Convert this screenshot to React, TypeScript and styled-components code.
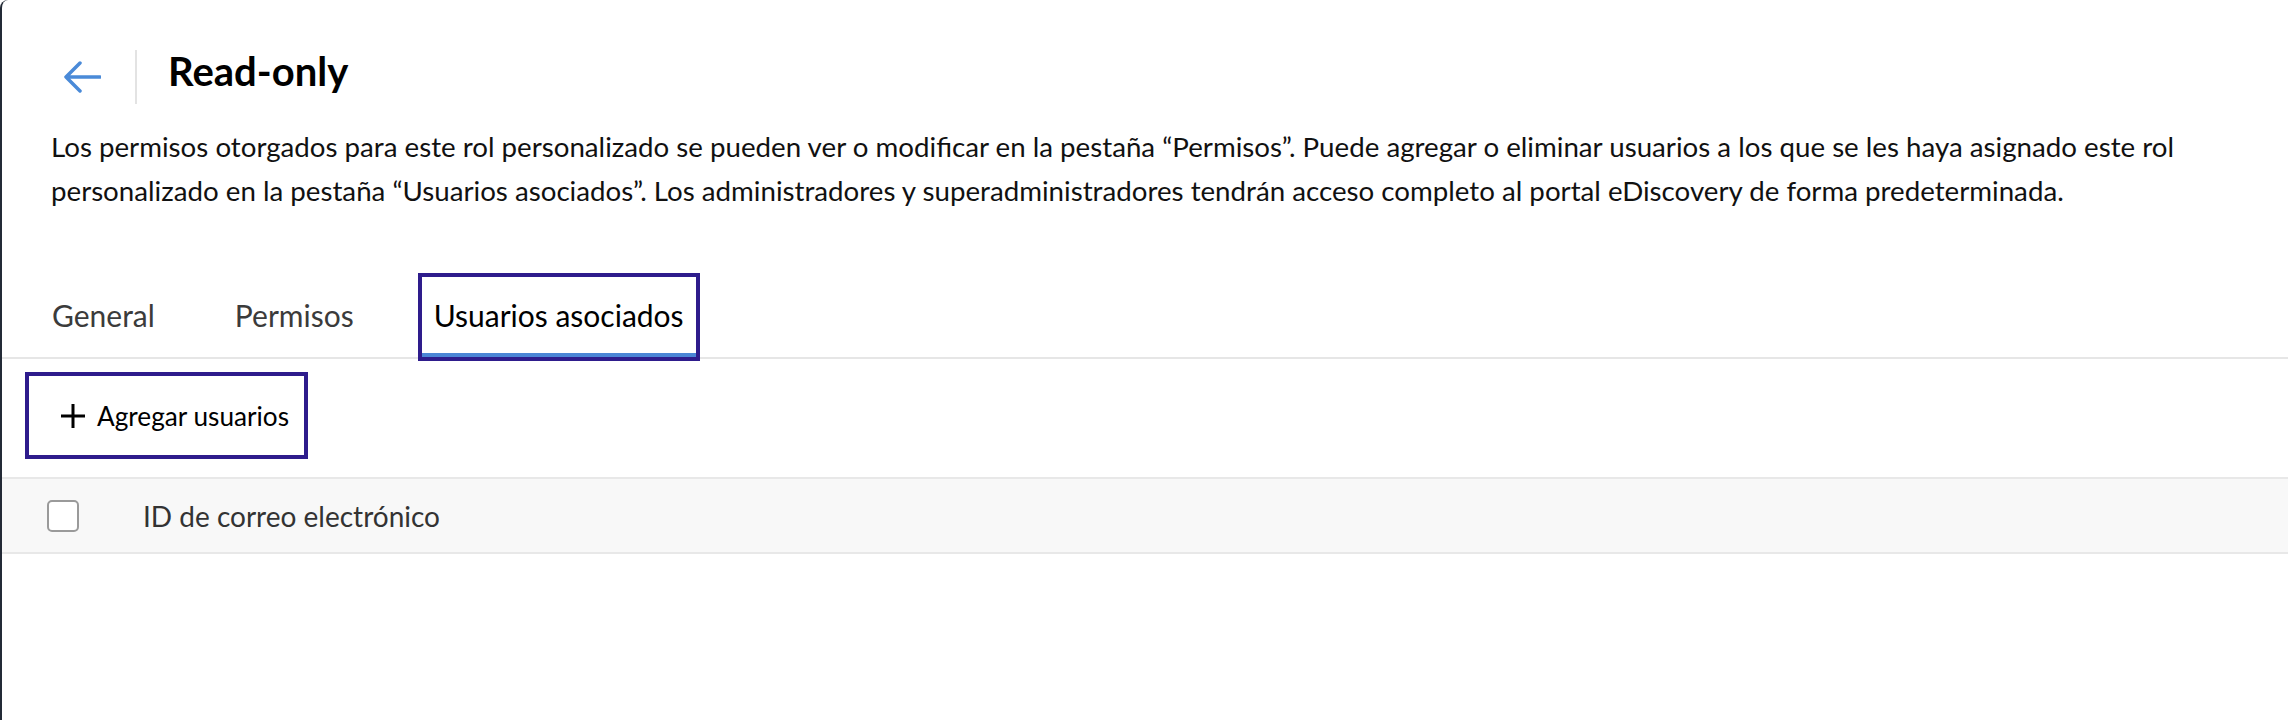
import React from "react";
import styled, { createGlobalStyle } from "styled-components";

const GlobalStyle = createGlobalStyle`
  html, body {
    margin: 0;
    padding: 0;
    background: #ffffff;
    font-family: Lato, "Open Sans", "Liberation Sans", sans-serif;
  }
`;

const Frame = styled.div`
  min-height: 100vh;
  box-sizing: border-box;
  background: #ffffff;
  border-left: 2px solid #232a36;
  border-top-left-radius: 8px;
  overflow: hidden;
`;

const Header = styled.div`
  display: flex;
  align-items: center;
  height: 54px;
  margin-top: 50px;
  padding-left: 61px;
`;

const BackButton = styled.button`
  display: flex;
  align-items: center;
  justify-content: center;
  padding: 0;
  border: none;
  background: none;
  cursor: pointer;
`;

const Divider = styled.div`
  width: 2px;
  height: 54px;
  background: #e3e3e3;
  margin-left: 34px;
`;

const Title = styled.h1`
  align-self: flex-start;
  margin: -6px 0 0 31px;
  font-size: 40px;
  font-weight: 700;
  color: #000000;
  line-height: 54px;
`;

const Description = styled.p`
  margin: 21px 0 0;
  padding: 0 40px 0 49px;
  font-size: 27.7px;
  line-height: 44px;
  color: #111111;
`;

const TabStrip = styled.div`
  display: flex;
  gap: 56px;
  margin-top: 64px;
  padding-left: 38px;
  border-bottom: 2px solid #e6e6e6;
`;

const Tab = styled.div<{ active?: boolean }>`
  display: flex;
  align-items: center;
  height: 80px;
  box-sizing: border-box;
  padding: 0 12px;
  font-size: 30px;
  color: ${(p) => (p.active ? "#000000" : "#3b3b3b")};
  border-bottom: 4px solid ${(p) => (p.active ? "#4a86d6" : "transparent")};
  outline: ${(p) => (p.active ? "4px solid #2e1c8c" : "none")};
  cursor: pointer;
`;

const Toolbar = styled.div`
  display: flex;
  padding: 17px 0 22px 27px;
`;

const AddButton = styled.button`
  display: flex;
  align-items: center;
  gap: 11px;
  height: 79px;
  box-sizing: border-box;
  padding: 0 15px 0 31px;
  border: none;
  background: #ffffff;
  outline: 4px solid #2e1c8c;
  font-family: inherit;
  font-size: 26.2px;
  color: #000000;
  cursor: pointer;
`;

const TableHeader = styled.div`
  display: flex;
  align-items: center;
  height: 77px;
  box-sizing: border-box;
  padding-left: 45px;
  background: #f8f8f8;
  border-top: 2px solid #e8e8e8;
  border-bottom: 2px solid #e8e8e8;
`;

const Checkbox = styled.span`
  width: 32px;
  height: 32px;
  box-sizing: border-box;
  border: 2px solid #9a9a9a;
  border-radius: 5px;
  background: #ffffff;
`;

const ColumnLabel = styled.span`
  margin-left: 64px;
  font-size: 28px;
  color: #333333;
`;

const tabs = ["General", "Permisos", "Usuarios asociados"];

const App: React.FC = () => {
  return (
    <>
      <GlobalStyle />
      <Frame>
        <Header>
          <BackButton aria-label="Volver">
            <svg width="38" height="32" viewBox="0 0 38 32" fill="none">
              <path
                d="M37 16H3M17 2L3 16l14 14"
                stroke="#4a8ad8"
                strokeWidth="3.5"
                strokeLinecap="round"
                strokeLinejoin="round"
              />
            </svg>
          </BackButton>
          <Divider />
          <Title>Read-only</Title>
        </Header>
        <Description>
          Los permisos otorgados para este rol personalizado se pueden ver o modificar en la
          pestaña “Permisos”. Puede agregar o eliminar usuarios a los que se les haya asignado
          este rol personalizado en la pestaña “Usuarios asociados”. Los administradores y
          superadministradores tendrán acceso completo al portal eDiscovery de forma
          predeterminada.
        </Description>
        <TabStrip>
          {tabs.map((t, i) => (
            <Tab key={t} active={i === 2}>
              {t}
            </Tab>
          ))}
        </TabStrip>
        <Toolbar>
          <AddButton>
            <svg width="26" height="26" viewBox="0 0 26 26" fill="none">
              <path d="M13 1v24M1 13h24" stroke="#000" strokeWidth="3" />
            </svg>
            Agregar usuarios
          </AddButton>
        </Toolbar>
        <TableHeader>
          <Checkbox />
          <ColumnLabel>ID de correo electrónico</ColumnLabel>
        </TableHeader>
      </Frame>
    </>
  );
};

export default App;
